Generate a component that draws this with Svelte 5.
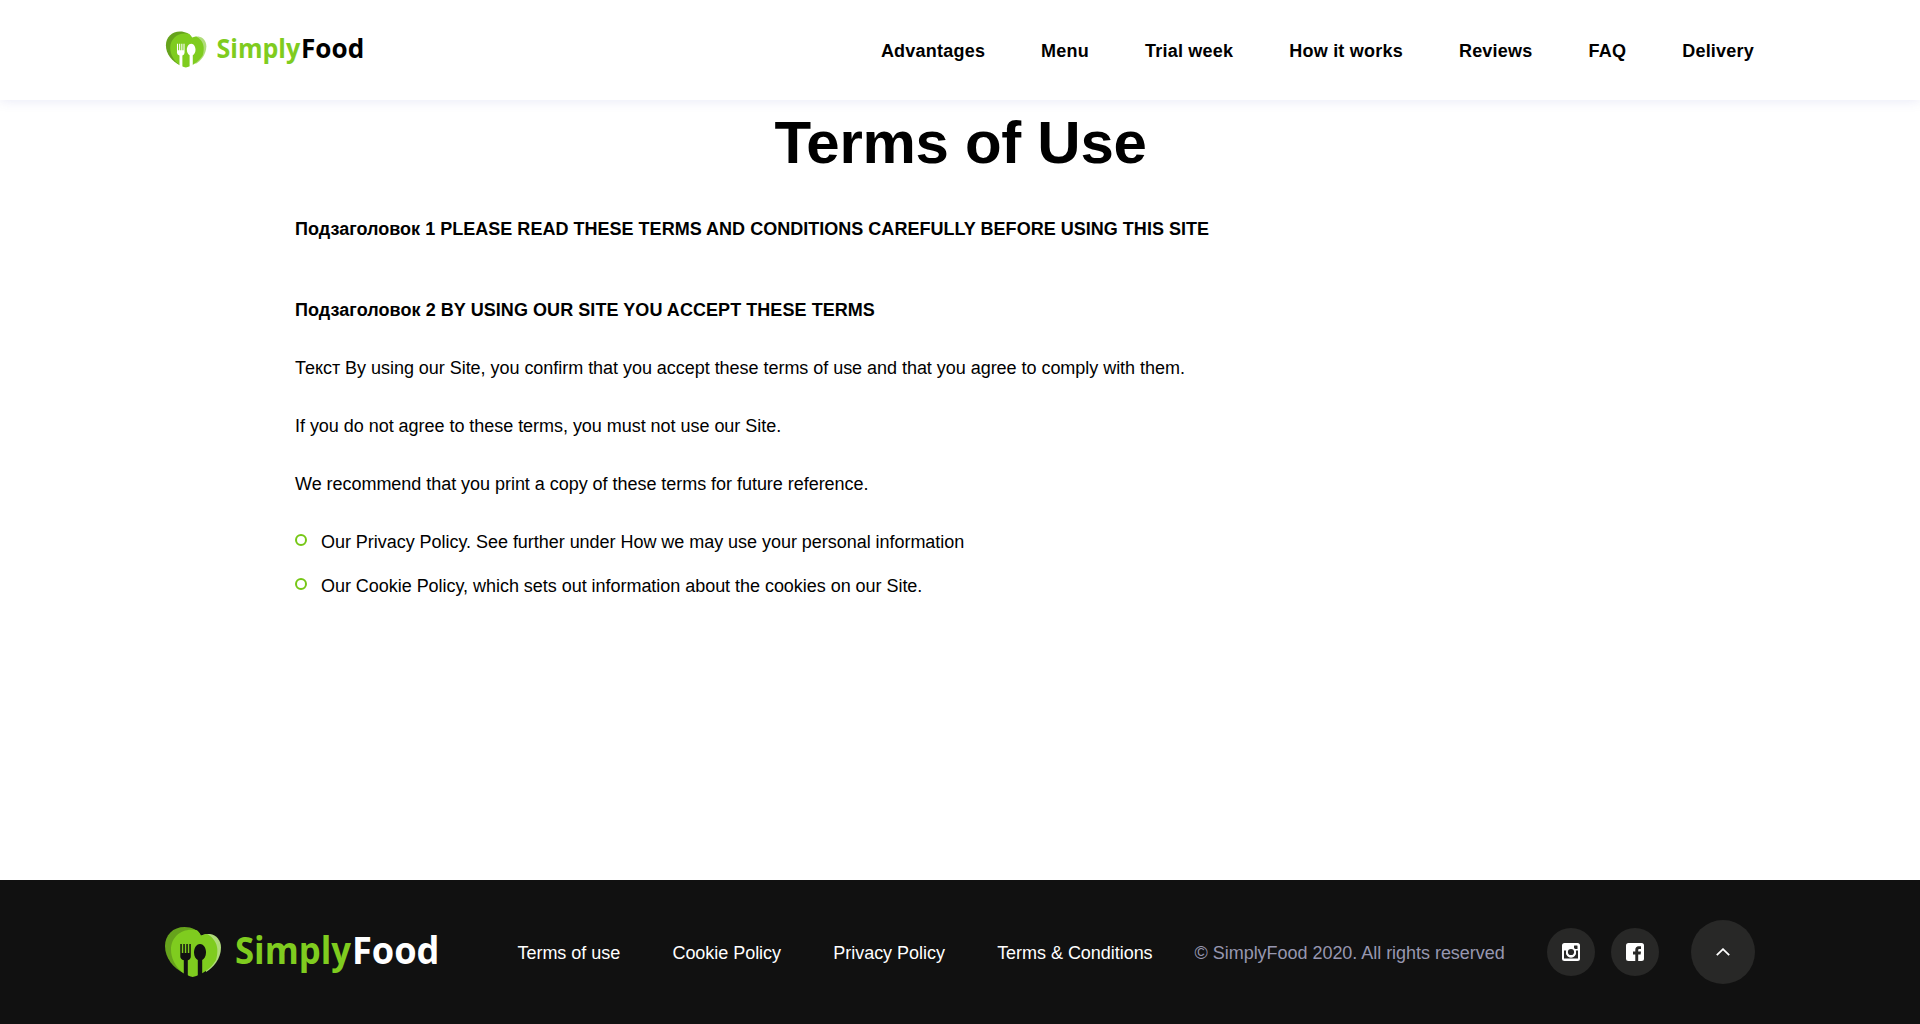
<script>
  const menu = ['Advantages', 'Menu', 'Trial week', 'How it works', 'Reviews', 'FAQ', 'Delivery'];
  const footerLinks = ['Terms of use', 'Cookie Policy', 'Privacy Policy', 'Terms & Conditions'];
  const policies = [
    'Our Privacy Policy. See further under How we may use your personal information',
    'Our Cookie Policy, which sets out information about the cookies on our Site.'
  ];
</script>

{#snippet logo(kind)}
  <a class="logo {kind}" href="#top" aria-label="SimplyFood">
    <svg viewBox="0 0 273 54" xmlns="http://www.w3.org/2000/svg">
      <path fill="#66a31c" d="M20 49C8 43 0 33 0 21C0 10 8 2 19.500 2C27 2 33 5 36 10.700L28 50Z" />
      <path fill="#b0dc7a" d="M36 10.700C39 9.300 42 8.700 45 9C51.500 10 56 15.500 56 22.500C56 34 48 43 41 47Z" />
      <path fill="#7fcc1f" d="M27.700 52C24 51 20 49.500 17 47C10 41 6 33 6 24.500C6 13 15 4.700 26 4.700C28.500 4.700 31 4.800 32 5.200C34 7 35 8.500 36 10.700C38 9.700 40 9.200 42 9C48 12 52 18 52.300 24C52.500 28 52 32 51 35C46 43.500 37.500 49.500 27.700 52Z" />
      <g class="cutlery">
        <path d="M15.300 19h1.500v9h1.500v-9h1.500v9h1.500v-9h1.500v9h1.500v-9h1.500v12.500q0 2.800-3 3.700v17l-4-2V35.200q-3.500-.9-3.500-3.700Z" />
        <path d="M35 19c4 0 6 4.500 6 8.500c0 4-2 6.500-3.800 7.500v14l-4.400 2V35c-1.800-1-3.800-3.500-3.800-7.500c0-4 2-8.500 6-8.500Z" />
      </g>
      <text class="word simply" x="70" y="38.500" textLength="116" lengthAdjust="spacingAndGlyphs">Simply</text>
      <text class="word food" x="187" y="38.500" textLength="87.500" lengthAdjust="spacingAndGlyphs">Food</text>
    </svg>
  </a>
{/snippet}

<div class="page" id="top">
  <header>
    <div class="container bar">
      {@render logo('small')}
      <nav class="menu">
        {#each menu as item}<a href="#top">{item}</a>{/each}
      </nav>
    </div>
  </header>

  <main>
    <h1>Terms of Use</h1>
    <article>
      <h2>Подзаголовок 1 PLEASE READ THESE TERMS AND CONDITIONS CAREFULLY BEFORE USING THIS SITE</h2>
      <h2>Подзаголовок 2 BY USING OUR SITE YOU ACCEPT THESE TERMS</h2>
      <p>Текст By using our Site, you confirm that you accept these terms of use and that you agree to comply with them.</p>
      <p>If you do not agree to these terms, you must not use our Site.</p>
      <p>We recommend that you print a copy of these terms for future reference.</p>
      <ul>
        {#each policies as policy}<li><i></i>{policy}</li>{/each}
      </ul>
    </article>
  </main>

  <footer>
    <div class="container foot">
      {@render logo('large')}
      <nav class="links">
        {#each footerLinks as link}<a href="#top">{link}</a>{/each}
      </nav>
      <span class="copy">© SimplyFood 2020. All rights reserved</span>
      <a class="round" href="#top" aria-label="Instagram">
        <svg width="18" height="18" viewBox="0 0 18 18">
          <rect width="18" height="18" rx="2.500" fill="#fff" />
          <path fill="#282827" d="M2 7.500h2.500a5 5 0 1 0 9 0H16V15.500H2Z" />
          <rect x="12" y="2.500" width="3.500" height="3.500" rx=".5" fill="#282827" />
          <circle cx="9" cy="9" r="5" fill="#fff" />
          <circle cx="9" cy="9" r="3.100" fill="#282827" />
        </svg>
      </a>
      <a class="round" href="#top" aria-label="Facebook">
        <svg width="18" height="18" viewBox="0 0 18 18">
          <rect width="18" height="18" rx="2.500" fill="#fff" />
          <path fill="#282827" d="M9.300 18V11.500H7V8.500H9.300V7C9.300 4.500 10.700 3.300 12.600 3.300H15V6H13.500C12.500 6 12.200 6.500 12.200 7.300V8.500H15L14.600 11.500H12.200V18Z" />
        </svg>
      </a>
      <a class="round up" href="#top" aria-label="Back to top">
        <svg width="14" height="8" viewBox="0 0 14 8"><path d="M.8 7.200L7 1.200L13.200 7.200" fill="none" stroke="#fff" stroke-width="1.800" /></svg>
      </a>
    </div>
  </footer>
</div>

<style>
  :global(body) { margin: 0; background: #fff; overflow: hidden; }
  .page {
    display: flex;
    flex-direction: column;
    height: 1024px;
    font: 18px/28px "Liberation Sans", Arial, sans-serif;
    letter-spacing: -0.035px;
    color: #000;
  }
  a { color: inherit; text-decoration: none; white-space: nowrap; }
  .container { width: 1590px; margin: 0 auto; display: flex; align-items: center; }
  header { height: 100px; flex: none; box-shadow: 0 0 12px rgba(80, 90, 190, 0.15); }
  .bar { height: 100px; justify-content: space-between; }
  .logo svg { display: block; overflow: visible; }
  .small { padding-bottom: 2px; }
  .small svg { width: 199px; height: 39px; }
  .large svg { width: 273px; height: 54px; }
  .word { font: 700 38px "Open Sans", sans-serif; letter-spacing: 0; }
  .simply { fill: #7fcc1f; }
  .small .food { fill: #000; }
  .large .food { fill: #fff; }
  .small .cutlery { fill: #fff; }
  .large .cutlery { fill: #111; }
  .menu { display: flex; gap: 56px; font-weight: 700; padding: 2px 1px 0 0; letter-spacing: 0.22px; }
  main { flex: 1; }
  h1 { margin: 0; padding: 8px 0 0 1px; font-size: 60px; line-height: 70px; text-align: center; letter-spacing: -0.3px; }
  article { width: 1330px; margin: 37px auto 0; }
  h2 { margin: 0; font-size: 18px; line-height: 28px; letter-spacing: 0.02px; }
  h2 + h2 { margin-top: 53px; letter-spacing: 0.06px; }
  p { margin: 30px 0 0; }
  ul { margin: 30px 0 0; padding: 0; list-style: none; display: grid; gap: 16px; }
  li { display: flex; align-items: center; }
  i { box-sizing: border-box; width: 12px; height: 12px; margin: -4px 14px 0 0; border: 2px solid #76c716; border-radius: 50%; }
  footer { flex: none; height: 144px; background: #111; }
  .foot { height: 144px; }
  .links { display: flex; gap: 52.3px; margin-left: 79.5px; padding-top: 2px; color: #fff; }
  .copy { margin-left: 42px; margin-right: auto; padding-top: 2px; color: #9797b0; white-space: nowrap; }
  .round { width: 48px; height: 48px; margin-left: 16px; border-radius: 50%; background: #282827; display: grid; place-items: center; }
  .up { width: 64px; height: 64px; margin-left: 32px; }
</style>
